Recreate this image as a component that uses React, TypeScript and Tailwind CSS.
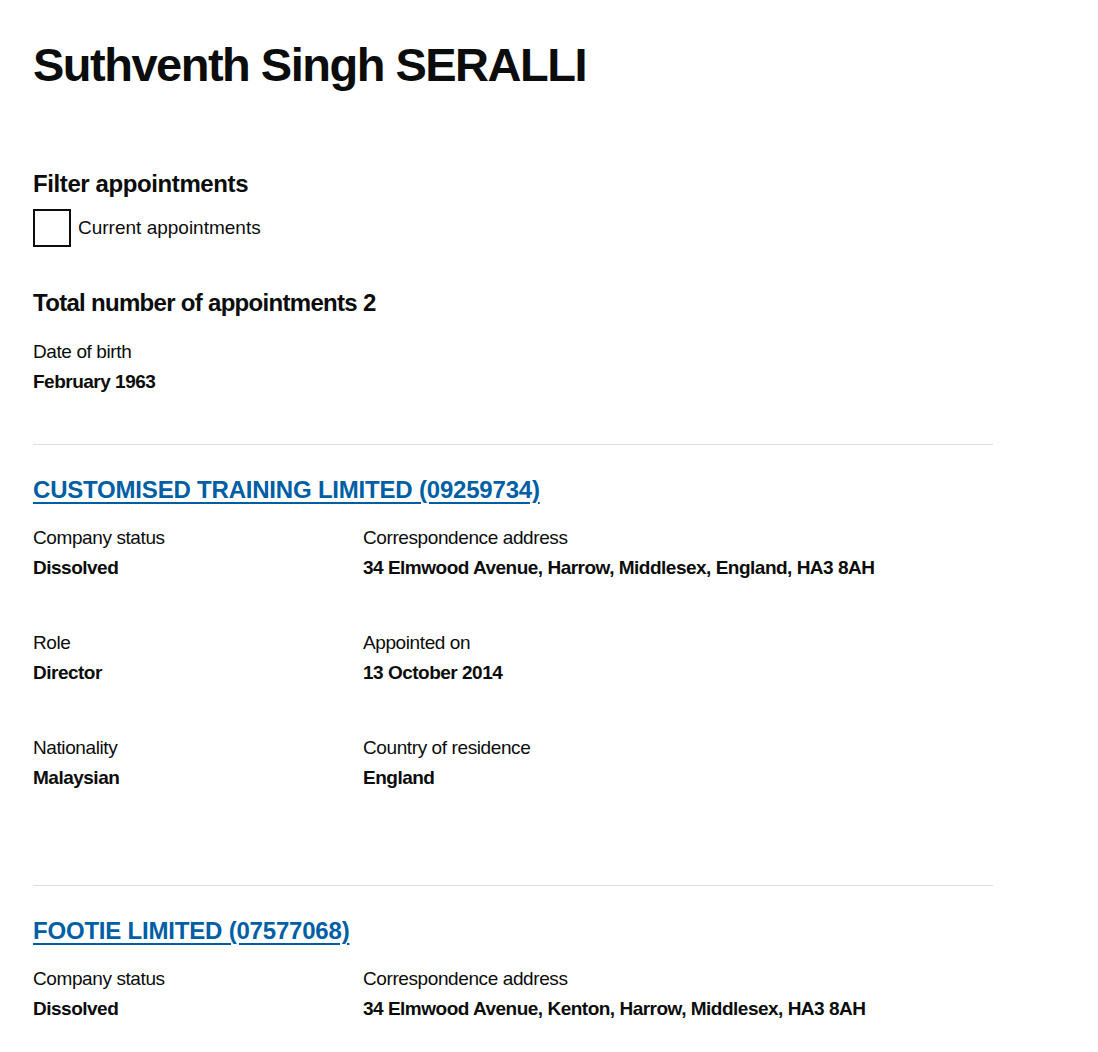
import React, { FC } from "react";

type Field = { label: string; value: string };

type Appointment = {
  name: string;
  rows: Field[][];
};

const appointments: Appointment[] = [
  {
    name: "CUSTOMISED TRAINING LIMITED (09259734)",
    rows: [
      [
        { label: "Company status", value: "Dissolved" },
        {
          label: "Correspondence address",
          value: "34 Elmwood Avenue, Harrow, Middlesex, England, HA3 8AH",
        },
      ],
      [
        { label: "Role", value: "Director" },
        { label: "Appointed on", value: "13 October 2014" },
      ],
      [
        { label: "Nationality", value: "Malaysian" },
        { label: "Country of residence", value: "England" },
      ],
    ],
  },
  {
    name: "FOOTIE LIMITED (07577068)",
    rows: [
      [
        { label: "Company status", value: "Dissolved" },
        {
          label: "Correspondence address",
          value: "34 Elmwood Avenue, Kenton, Harrow, Middlesex, HA3 8AH",
        },
      ],
    ],
  },
];

const FieldBlock: FC<{ field: Field }> = ({ field }) => {
  return (
    <div>
      <div className="text-[19px] leading-[30px] tracking-[-0.4px]">
        {field.label}
      </div>
      <div className="text-[19px] leading-[30px] font-bold tracking-[-0.5px]">
        {field.value}
      </div>
    </div>
  );
};

const AppointmentItem: FC<{ item: Appointment; last: boolean }> = ({
  item,
  last,
}) => {
  return (
    <div className={last ? "" : "pb-[92px]"}>
      <hr className="border-0 border-t border-[#dedede]" />
      {/* Company link */}
      <h2 className="mt-[30px] text-[24px] leading-[30px] font-bold tracking-[-0.2px]">
        <a
          href="#"
          className="text-[#005ea5] underline decoration-2 underline-offset-[4px]"
        >
          {item.name}
        </a>
      </h2>
      <div className="mt-[18px] flex flex-col gap-[45px]">
        {item.rows.map((row, i) => (
          <div key={i} className="grid grid-cols-[330px_1fr]">
            {row.map((field) => (
              <FieldBlock key={field.label} field={field} />
            ))}
          </div>
        ))}
      </div>
    </div>
  );
};

const App: FC = () => {
  return (
    <div
      className="min-h-screen bg-white text-[#0b0c0c]"
      style={{ fontFamily: '"Liberation Sans", Arial, sans-serif' }}
    >
      <main className="ml-[33px] w-[960px] pt-[40px]">
        <h1 className="text-[47px] leading-[50px] font-bold tracking-[-1.5px]">
          Suthventh Singh SERALLI
        </h1>

        {/* Filter */}
        <h2 className="mt-[79px] text-[24px] leading-[30px] font-bold tracking-[-0.4px]">
          Filter appointments
        </h2>
        <label className="mt-[10px] flex items-center gap-[7px]">
          <span className="block w-[38px] h-[38px] border-2 border-[#0b0c0c] bg-white" />
          <span className="text-[19px] leading-[25px] -mt-[2px]">Current appointments</span>
        </label>

        <h2 className="mt-[41px] text-[24px] leading-[30px] font-bold tracking-[-0.7px]">
          Total number of appointments 2
        </h2>
        <div className="mt-[19px]">
          <FieldBlock field={{ label: "Date of birth", value: "February 1963" }} />
        </div>

        <div className="mt-[47px]">
          {appointments.map((a, i) => (
            <AppointmentItem
              key={a.name}
              item={a}
              last={i === appointments.length - 1}
            />
          ))}
        </div>
      </main>
    </div>
  );
};

export default App;
